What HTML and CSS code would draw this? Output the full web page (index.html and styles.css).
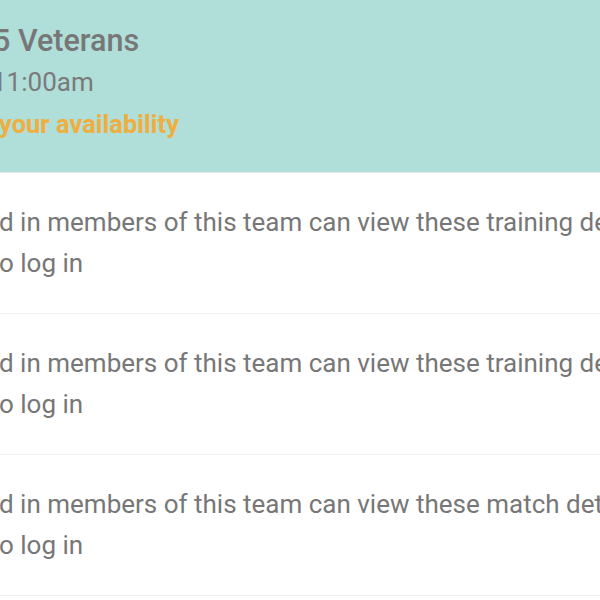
FILE: index.html
```html
<!DOCTYPE html>
<html>
<head>
<meta charset="utf-8">
<link rel="stylesheet" href="styles.css">
</head>
<body>
<div class="view">
  <header class="event">
    <div class="event-title"><span class="cut">Under 3</span>5 Veterans</div>
    <div class="event-time"><span class="cut">Sun 12 May, </span>11:00am</div>
    <div class="event-action"><span class="cut">Set </span>your availability</div>
  </header>
  <div class="notice">
    <p class="notice-line notice-text"><span class="cut">Only logge</span>d in members of this team can view these training details.</p>
    <p class="notice-line notice-link"><span class="cut">Click here t</span>o log in</p>
  </div>
  <div class="notice">
    <p class="notice-line notice-text"><span class="cut">Only logge</span>d in members of this team can view these training details.</p>
    <p class="notice-line notice-link"><span class="cut">Click here t</span>o log in</p>
  </div>
  <div class="notice">
    <p class="notice-line notice-text"><span class="cut">Only logge</span>d in members of this team can view these match details.</p>
    <p class="notice-line notice-link"><span class="cut">Click here t</span>o log in</p>
  </div>
</div>
</body>
</html>
```

FILE: styles.css
```css
html, body {
  margin: 0;
  padding: 0;
  background: #ffffff;
  overflow: hidden;
}
.view {
  width: 600px;
  height: 600px;
  overflow: hidden;
  font-family: Roboto, "Liberation Sans", sans-serif;
}
.cut {
  display: inline-block;
  width: 300px;
  margin-left: -300px;
  text-align: right;
  white-space: pre;
}
.event {
  background: #b0ded9;
  padding: 21px 0 28px 0;
  border-bottom: 1px solid #e4ece9;
}
.event-title,
.event-time,
.event-action {
  white-space: nowrap;
  line-height: 40px;
}
.event-title {
  font-size: 30.5px;
  font-weight: 500;
  color: #777777;
  margin-left: -7px;
}
.event-time {
  font-size: 26px;
  color: #7a7a7a;
  margin-left: -8px;
  padding-top: 1px;
}
.event-action {
  font-size: 25.5px;
  font-weight: 700;
  color: #efae3d;
  margin-left: -1px;
  padding-top: 2px;
}
.notice {
  padding: 29px 0 31px 0;
  border-bottom: 1px solid #eeeeee;
}
.notice-line {
  margin: 0;
  font-size: 26px;
  line-height: 40px;
  color: #777777;
  white-space: nowrap;
}
.notice-text {
  margin-left: -1px;
}
.notice-link {
  margin-left: -1px;
  padding-top: 1px;
  margin-bottom: -1px;
}
```
